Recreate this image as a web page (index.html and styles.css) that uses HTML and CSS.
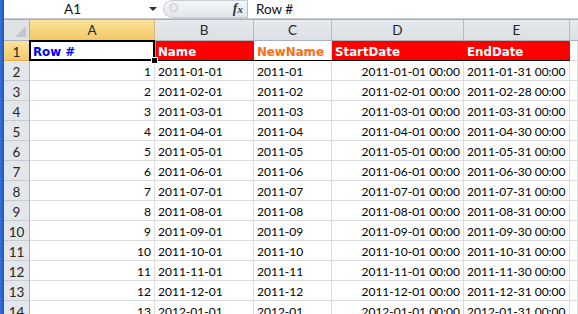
FILE: index.html
```html
<!DOCTYPE html>
<html>
<head>
<meta charset="utf-8">
<link rel="stylesheet" href="styles.css">
</head>
<body>
<div class="app">
  <div class="strip"></div>
  <div class="main">
    <div class="fbar">
      <div class="namebox"><span class="nbtext">A1</span><span class="arrow"></span></div>
      <div class="fxzone"><span class="knob"></span><span class="fx"><i>f</i><i class="sub">x</i></span></div>
      <div class="fcontent">Row #</div>
    </div>
    <div class="fsep"></div>
    <div class="sheet">
      <div class="corner"><span class="tri"></span></div>
      <div class="ch sel">A</div><div class="ch">B</div><div class="ch">C</div><div class="ch">D</div><div class="ch">E</div><div class="ch last"></div>

      <div class="rh sel">1</div>
      <div class="c hdr blue a1">Row #<span class="selbox"></span><span class="handle"></span></div>
      <div class="c hdr red cyan">Name</div>
      <div class="c hdr orange">NewName</div>
      <div class="c hdr red">StartDate</div>
      <div class="c hdr red">EndDate</div>
      <div class="c"></div>

      <div class="rh">2</div><div class="c r">1</div><div class="c">2011-01-01</div><div class="c">2011-01</div><div class="c r">2011-01-01 00:00</div><div class="c">2011-01-31 00:00</div><div class="c"></div>
      <div class="rh">3</div><div class="c r">2</div><div class="c">2011-02-01</div><div class="c">2011-02</div><div class="c r">2011-02-01 00:00</div><div class="c">2011-02-28 00:00</div><div class="c"></div>
      <div class="rh">4</div><div class="c r">3</div><div class="c">2011-03-01</div><div class="c">2011-03</div><div class="c r">2011-03-01 00:00</div><div class="c">2011-03-31 00:00</div><div class="c"></div>
      <div class="rh">5</div><div class="c r">4</div><div class="c">2011-04-01</div><div class="c">2011-04</div><div class="c r">2011-04-01 00:00</div><div class="c">2011-04-30 00:00</div><div class="c"></div>
      <div class="rh">6</div><div class="c r">5</div><div class="c">2011-05-01</div><div class="c">2011-05</div><div class="c r">2011-05-01 00:00</div><div class="c">2011-05-31 00:00</div><div class="c"></div>
      <div class="rh">7</div><div class="c r">6</div><div class="c">2011-06-01</div><div class="c">2011-06</div><div class="c r">2011-06-01 00:00</div><div class="c">2011-06-30 00:00</div><div class="c"></div>
      <div class="rh">8</div><div class="c r">7</div><div class="c">2011-07-01</div><div class="c">2011-07</div><div class="c r">2011-07-01 00:00</div><div class="c">2011-07-31 00:00</div><div class="c"></div>
      <div class="rh">9</div><div class="c r">8</div><div class="c">2011-08-01</div><div class="c">2011-08</div><div class="c r">2011-08-01 00:00</div><div class="c">2011-08-31 00:00</div><div class="c"></div>
      <div class="rh">10</div><div class="c r">9</div><div class="c">2011-09-01</div><div class="c">2011-09</div><div class="c r">2011-09-01 00:00</div><div class="c">2011-09-30 00:00</div><div class="c"></div>
      <div class="rh">11</div><div class="c r">10</div><div class="c">2011-10-01</div><div class="c">2011-10</div><div class="c r">2011-10-01 00:00</div><div class="c">2011-10-31 00:00</div><div class="c"></div>
      <div class="rh">12</div><div class="c r">11</div><div class="c">2011-11-01</div><div class="c">2011-11</div><div class="c r">2011-11-01 00:00</div><div class="c">2011-11-30 00:00</div><div class="c"></div>
      <div class="rh">13</div><div class="c r">12</div><div class="c">2011-12-01</div><div class="c">2011-12</div><div class="c r">2011-12-01 00:00</div><div class="c">2011-12-31 00:00</div><div class="c"></div>
      <div class="rh">14</div><div class="c r">13</div><div class="c">2012-01-01</div><div class="c">2012-01</div><div class="c r">2012-01-01 00:00</div><div class="c">2012-01-31 00:00</div><div class="c"></div>
    </div>
  </div>
</div>
</body>
</html>
```

FILE: styles.css
```css
html, body {
  margin: 0;
  padding: 0;
  width: 578px;
  height: 314px;
  overflow: hidden;
  background: #fff;
}
.app {
  display: flex;
  height: 314px;
}
.strip {
  width: 4px;
  flex: none;
  background: linear-gradient(to right, #3a73d6, #1b55c4);
}
.main {
  flex: 1;
  display: flex;
  flex-direction: column;
  min-width: 0;
}
.fbar {
  height: 20px;
  display: flex;
  background: #fff;
  font-family: Lato, "Liberation Sans", sans-serif;
  font-size: 13.5px;
  color: #111;
}
.namebox {
  width: 159px;
  flex: none;
  display: flex;
  align-items: center;
}
.nbtext {
  flex: 1;
  text-align: center;
  padding-right: 8px;
  margin-top: -1px;
}
.arrow {
  width: 0;
  height: 0;
  border-left: 4px solid transparent;
  border-right: 4px solid transparent;
  border-top: 4px solid #333;
  margin-right: 6px;
  margin-top: -1px;
}
.fxzone {
  width: 85px;
  flex: none;
  box-sizing: border-box;
  border: 1px solid #c9cdd3;
  border-right: 1px solid #b7bcc4;
  border-radius: 11px 0 0 11px;
  background: linear-gradient(#f4f5f7, #e3e6ea);
  display: flex;
  align-items: center;
  justify-content: space-between;
  padding-left: 5px;
  padding-right: 4px;
}
.knob {
  width: 7px;
  height: 7px;
  border-radius: 50%;
  border: 1px solid #c4c8ce;
  background: #e7e9ec;
  margin-top: -4px;
}
.fx {
  font-family: "Liberation Serif", serif;
  font-size: 14px;
  font-weight: bold;
  color: #3a3a3a;
}
.fx .sub {
  font-size: 11px;
}
.fcontent {
  flex: 1;
  padding-left: 8px;
  display: flex;
  align-items: center;
  margin-top: -1px;
}
.fsep {
  height: 3px;
  box-sizing: border-box;
  border-top: 1px solid #c6cad0;
  border-bottom: 1px solid #a9aeb5;
  background: #eef0f2;
}
.sheet {
  display: grid;
  grid-template-columns: 26px 125px 99px 78px 132px 106px 1fr;
  grid-template-rows: 21px;
  grid-auto-rows: 20px;
  font-family: Lato, "Liberation Sans", sans-serif;
  font-size: 12px;
  color: #000;
}
.corner {
  box-sizing: border-box;
  background: #dfe3e8;
  border-right: 1px solid #abb1ba;
  border-bottom: 1px solid #abb1ba;
  position: relative;
}
.tri {
  position: absolute;
  right: 3px;
  bottom: 3px;
  width: 0;
  height: 0;
  border-left: 11px solid transparent;
  border-bottom: 11px solid #c3c7cd;
}
.ch {
  box-sizing: border-box;
  background: linear-gradient(#e6e9ed, #dcdfe4);
  border-right: 1px solid #b4bac2;
  border-bottom: 1px solid #abb1ba;
  display: flex;
  align-items: flex-end;
  justify-content: center;
  padding-bottom: 3px;
  line-height: 14px;
  font-size: 13.5px;
  color: #262626;
}
.ch.sel {
  background: linear-gradient(#fbe39a, #f3c866);
  border-bottom: 1px solid #e8b34a;
  border-right: 1px solid #d7b877;
}
.ch.last {
  border-right: none;
}
.rh {
  box-sizing: border-box;
  background: #e3e6eb;
  border-right: 1px solid #abb1ba;
  border-bottom: 1px solid #c7cbd1;
  display: flex;
  align-items: flex-end;
  justify-content: center;
  padding-bottom: 1px;
  line-height: 14px;
  font-size: 13.5px;
  color: #262626;
}
.rh.sel {
  background: linear-gradient(#fbe29a, #f4c96a);
  border-bottom: 1px solid #e2b252;
}
.c {
  box-sizing: border-box;
  border-right: 1px solid #dadcdd;
  border-bottom: 1px solid #dadcdd;
  padding: 0 3px 1px 3px;
  display: flex;
  align-items: flex-end;
  line-height: 14px;
  white-space: nowrap;
  overflow: hidden;
}
.c.r {
  justify-content: flex-end;
}
.c.hdr {
  font-family: "DejaVu Sans", Verdana, sans-serif;
  font-weight: bold;
  font-size: 11.8px;
  padding-bottom: 1px;
  border-bottom: 1px solid #000;
  overflow: visible;
}
.c.red {
  background: #ff0000;
  color: #fff;
  border-right-color: #ff0000;
}
.c.blue {
  color: #0000ff;
}
.c.orange {
  color: #fb6c17;
}
.c.cyan {
  box-shadow: inset 1px 0 0 #19c4dc;
}
.a1 {
  position: relative;
}
.selbox {
  position: absolute;
  left: -1px;
  top: -1px;
  right: -1px;
  bottom: -1px;
  border: 2px solid #000;
  pointer-events: none;
}
.handle {
  position: absolute;
  right: -4px;
  bottom: -4px;
  width: 5px;
  height: 5px;
  background: #000;
  border: 1px solid #fff;
  z-index: 2;
}
```
